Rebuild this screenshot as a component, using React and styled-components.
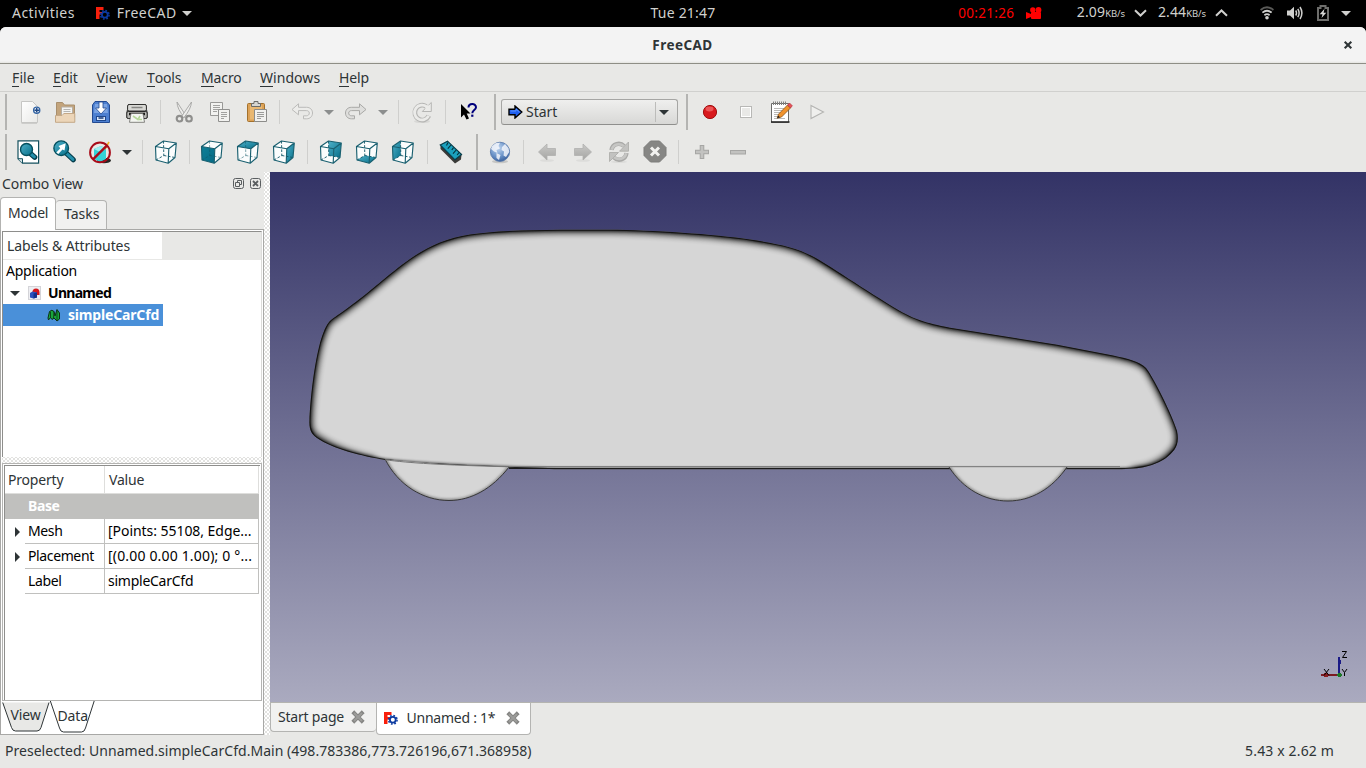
import React from "react";
import styled, { createGlobalStyle } from "styled-components";

const Global = createGlobalStyle`
  * { box-sizing: border-box; }
  html, body { margin: 0; padding: 0; overflow: hidden; }
  body { background: #000; font-family: "Noto Sans", "Open Sans", sans-serif; font-size: 14px; color: #2e3436; }
  svg { display: block; flex: none; }
`;

const Screen = styled.div`
  width: 1366px;
  height: 768px;
  display: flex;
  flex-direction: column;
  overflow: hidden;
  background: #000;
`;

const Text = styled.span`
  white-space: pre;
  font-size: ${(p) => p.$size || 14}px;
  letter-spacing: ${(p) => p.$ls ?? -0.2}px;
  font-weight: ${(p) => (p.$bold ? 700 : 400)};
  color: ${(p) => p.$color || "inherit"};
  line-height: 20px;
`;

/* ---------- desktop panel ---------- */
const Panel = styled.header`
  flex: none;
  height: 27px;
  display: flex;
  align-items: center;
  color: #d0d0ce;
  padding: 0 12px 1px;
`;
const PanelSide = styled.div`
  flex: 1 1 0;
  display: flex;
  align-items: center;
  justify-content: ${(p) => (p.$end ? "flex-end" : "flex-start")};
`;
const Rate = styled.div`
  display: flex;
  align-items: baseline;
`;
const Gap = styled.span`
  flex: none;
  width: ${(p) => p.$w}px;
`;
const Spacer = styled.span`
  flex: 1;
`;

/* ---------- window ---------- */
const Window = styled.main`
  flex: 1;
  min-height: 0;
  display: flex;
  flex-direction: column;
  background: #e8e8e6;
  border-radius: 6px 6px 0 0;
  overflow: hidden;
`;
const TitleBar = styled.div`
  flex: none;
  height: 37px;
  display: flex;
  align-items: center;
  background: linear-gradient(#f3f3f3 34px, #e4e4e0 36px);
  border-bottom: 1px solid #8e8e86;
  padding: 0 13px 0 0;
`;
const Title = styled.div`
  flex: 1;
  text-align: center;
  padding-left: 22px;
`;
const MenuBar = styled.nav`
  flex: none;
  height: 28px;
  display: flex;
  align-items: center;
  border-bottom: 1px solid #d0d0ce;
  padding-left: 12px;
`;
const MenuItem = styled.div`
  width: ${(p) => p.$w}px;
`;
const Mnemonic = styled.span`
  display: inline-block;
  line-height: 17px;
  border-bottom: 1px solid #2e3436;
`;

const ToolBar = styled.div`
  flex: none;
  height: 40px;
  display: flex;
  align-items: center;
  padding-left: ${(p) => p.$pad || 0}px;
`;
const Handle = styled.div`
  flex: none;
  width: ${(p) => p.$w}px;
  height: 36px;
  display: flex;
  padding-left: ${(p) => p.$off}px;
  &::before {
    content: "";
    width: 2px;
    background: #b4b4b2;
  }
`;
const Slot = styled.div`
  flex: none;
  width: ${(p) => p.$w || 36}px;
  height: 36px;
  display: flex;
  align-items: center;
  justify-content: center;
`;
const Separator = styled.div`
  flex: none;
  width: ${(p) => p.$w || 11}px;
  height: 24px;
  display: flex;
  justify-content: center;
  &::before {
    content: "";
    width: 1px;
    background: #cfcfcd;
  }
`;
const Combo = styled.div`
  flex: none;
  width: 177px;
  height: 26px;
  display: flex;
  align-items: center;
  border: 1px solid #a6a6a4;
  border-bottom-color: #8f8f8d;
  border-radius: 3px;
  background: linear-gradient(#efefee, #d8d8d6);
  padding-left: 6px;
`;
const ComboLabel = styled.span`
  flex: 1;
  padding-left: 3px;
`;
const ComboButton = styled.span`
  width: 22px;
  height: 20px;
  display: flex;
  align-items: center;
  padding-left: 3px;
  border-left: 1px solid #bcbcba;
`;

const Workspace = styled.div`
  flex: 1;
  min-height: 0;
  display: flex;
`;

/* ---------- combo view dock ---------- */
const Dock = styled.aside`
  flex: none;
  width: 264px;
  display: flex;
  flex-direction: column;
`;
const DockTitle = styled.div`
  flex: none;
  height: 25px;
  display: flex;
  align-items: center;
  padding: 0 2px 1px 2px;
`;
const DockTabs = styled.div`
  flex: none;
  height: 33px;
  display: flex;
  align-items: flex-end;
  position: relative;
  z-index: 1;
  margin-bottom: -1px;
`;
const DockTab = styled.div`
  width: ${(p) => p.$w}px;
  height: ${(p) => (p.$active ? 33 : 30)}px;
  padding: ${(p) => (p.$active ? "5px 0 0 7px" : "3px 0 0 8px")};
  background: ${(p) => (p.$active ? "#fff" : "#f1f1f0")};
  border: 1px solid #b3b3b1;
  border-bottom: ${(p) => (p.$active ? "0" : "1px solid #a8a8a6")};
  border-left-width: ${(p) => (p.$active ? 1 : 0)}px;
  border-radius: 4px 4px 0 0;
`;
const Pane = styled.div`
  flex: none;
  height: 506px;
  display: flex;
  flex-direction: column;
  background: #fff;
  border: 1px solid #a8a8a6;
  padding: 1px 1px 0 1px;
`;
const Tree = styled.div`
  height: 226px;
  flex: none;
  border: 1px solid #8e8e8c;
  border-bottom: 0;
  border-right: 1px solid #dcdcda;
`;
const TreeHeader = styled.div`
  height: 28px;
  display: flex;
  background: #e8e8e6;
  border-bottom: 1px solid #e8e8e6;
`;
const TreeHeaderCell = styled.div`
  width: 159px;
  background: #fff;
  padding: 4px 0 0 4px;
`;
const TreeRow = styled.div`
  height: 22px;
  width: ${(p) => (p.$selected ? 160 : 258)}px;
  display: flex;
  align-items: center;
  padding-left: ${(p) => p.$indent}px;
  color: ${(p) => (p.$selected ? "#fff" : "#000")};
  background: ${(p) => (p.$selected ? "#4a90d9" : "transparent")};
`;
const Dots = styled.div`
  flex: none;
  width: ${(p) => (p.$w ? p.$w + "px" : "auto")};
  height: ${(p) => (p.$h ? p.$h + "px" : "auto")};
  background-color: #e2e2e0;
  background-image: radial-gradient(circle, #fff 0.9px, transparent 1px), radial-gradient(circle, #fff 0.9px, transparent 1px);
  background-size: 4px 4px;
  background-position: 0 0, 2px 2px;
`;
const PropFrame = styled.div`
  flex: none;
  height: 238px;
  border: 1px solid #b4b4b2;
  padding: 1px 1px 0 1px;
`;
const PropTable = styled.div`
  height: 235px;
  border: 1px solid #8e8e8c;
  border-right: 0;
  border-bottom: 0;
`;
const PropRow = styled.div`
  width: 254px;
  height: ${(p) => p.$h || 25}px;
  display: flex;
  color: ${(p) => (p.$head ? "#2e3436" : "#000")};
`;
const Expander = styled.div`
  width: 20px;
  display: flex;
  align-items: center;
  justify-content: center;
  padding-left: 4px;
`;
const PropCell = styled.div`
  width: ${(p) => p.$w}px;
  display: flex;
  align-items: center;
  padding-left: ${(p) => p.$pad}px;
  border-right: 1px solid ${(p) => p.$line || "#c0c0be"};
  border-bottom: 1px solid ${(p) => p.$line || "#c0c0be"};
`;
const PropGroup = styled.div`
  height: 25px;
  width: 254px;
  display: flex;
  align-items: center;
  padding: 0 0 1px 23px;
  background: #c0c0be;
  color: #fff;
`;
const SheetTabs = styled.div`
  flex: 1;
  display: flex;
  margin-left: -2px;
`;

/* ---------- 3D area ---------- */
const Center = styled.section`
  flex: 1;
  min-width: 0;
  display: flex;
  flex-direction: column;
`;
const Viewport = styled.div`
  flex: none;
  height: 530px;
  background: linear-gradient(#333366, #aaaabf);
`;
const DocTabs = styled.div`
  flex: none;
  height: 33px;
  display: flex;
  align-items: flex-start;
  border-top: 1px solid #b4b4b0;
`;
const DocTab = styled.div`
  width: ${(p) => p.$w}px;
  height: ${(p) => (p.$active ? 32 : 29)}px;
  display: flex;
  align-items: center;
  padding: 0 0 ${(p) => (p.$active ? 1 : 0)}px ${(p) => (p.$active ? 6 : 7)}px;
  background: ${(p) => (p.$active ? "#fff" : "#f1f1f0")};
  border: 1px solid #b4b4b2;
  border-top: 0;
  border-right-width: ${(p) => (p.$active ? 1 : 0)}px;
  border-radius: 0 0 4px 4px;
`;
const StatusBar = styled.footer`
  flex: none;
  height: 33px;
  display: flex;
  align-items: center;
  justify-content: space-between;
  padding: 0 32px 1px 5px;
`;

/* ---------- icons ---------- */
const Ic = ({ s = 24, children, ...r }) => (
  <svg width={s} height={s} viewBox={`0 0 ${s} ${s}`} {...r}>{children}</svg>
);

const FreeCadLogo = ({ blue = "#0b3aa0" }) => (
  <svg width="15" height="15" viewBox="0 0 15 15">
    <path d="M1 1H8.5V4H4.500V6H7V8.500H4.500V13H1Z" fill="#f8200c" />
    <circle cx="9.8" cy="8.8" r="2.9" fill="none" stroke={blue} strokeWidth="1.8" />
    <circle cx="9.8" cy="8.8" r="4.3" fill="none" stroke={blue} strokeWidth="1.5" strokeDasharray="1.7 1.68" />
  </svg>
);

const Arrow = ({ color = "#2e3436", w = 10, h = 5 }) => (
  <svg width={w} height={h} viewBox="0 0 10 5" preserveAspectRatio="none"><path d="M0 0H10L5 5Z" fill={color} /></svg>
);

const Defs = () => (
  <svg width="0" height="0" style={{ position: "absolute" }}>
    <defs>
      <linearGradient id="teal" x1="0" y1="0" x2="1" y2="1"><stop offset="0" stopColor="#0e8098" /><stop offset="1" stopColor="#066a84" /></linearGradient>
      <linearGradient id="tealLight" x1="0" y1="0" x2="1" y2="1"><stop offset="0" stopColor="#4fb0c8" /><stop offset="1" stopColor="#066f8a" /></linearGradient>
      <linearGradient id="grey" x1="0" y1="0" x2="0" y2="1"><stop offset="0" stopColor="#c9c9c7" /><stop offset="1" stopColor="#a5a5a3" /></linearGradient>
      <linearGradient id="paper" x1="0" y1="0" x2="1" y2="1"><stop offset="0" stopColor="#fff" /><stop offset="1" stopColor="#e9e9e7" /></linearGradient>
      <radialGradient id="globe" cx=".4" cy=".3" r=".75"><stop offset="0" stopColor="#c0d6f0" /><stop offset=".6" stopColor="#6a92c8" /><stop offset="1" stopColor="#345b98" /></radialGradient>
    </defs>
  </svg>
);

const NewIcon = () => (
  <Ic>
    <path d="M3.5 22.8H19" stroke="#c4c4c2" strokeWidth="2" />
    <path d="M3.5 1.5H14.5L19.5 6.5V22.5H3.5Z" fill="url(#paper)" stroke="#c6c6c4" />
    <circle cx="18.7" cy="10.3" r="3.1" fill="#fff" stroke="#3465a4" strokeWidth="1.3" />
    <path d="M18.7 8V12.6M16.4 10.3H21" stroke="#204a87" strokeWidth="1.6" />
  </Ic>
);
const OpenIcon = () => (
  <Ic>
    <path d="M2.5 17V2.5H8.5L10.5 5H20.5V17Z" fill="#c3a47c" stroke="#a98f6d" />
    <path d="M7.5 7H18.5V17H7.5Z" fill="#f4f4f2" stroke="#b5aea4" />
    <path d="M9.5 9.5H16.5M9.5 11.5H16.5M9.5 13.5H14" stroke="#b5b5b3" />
    <path d="M1.5 15.5H8L10 13.5H20.8V22.3H1.5Z" fill="#ecd5b8" stroke="#c4a887" />
  </Ic>
);
const SaveIcon = () => (
  <Ic>
    <path d="M6 1.5H17.5L20.5 5V22.5H3.5V5Z" fill="#4c7fd0" stroke="#234a91" />
    <path d="M6 4H18L19 13H5Z" fill="#7aa3e2" />
    <path d="M10 2V8H6.5L12 14L17.5 8H14V2Z" fill="#fff" stroke="#1f488e" strokeWidth=".8" />
    <rect x="7.5" y="16.5" width="9" height="4" fill="#dbe7f8" stroke="#1f488e" />
    <path d="M9.5 18H14.5" stroke="#1a3c78" strokeWidth="1.4" />
  </Ic>
);
const PrintIcon = () => (
  <Ic>
    <path d="M3.5 4.5H20.5L22 12V18H2V12Z" fill="#8e8e8a" stroke="#2c2c2a" />
    <rect x="2.6" y="4.5" width="18.8" height="6.5" rx="1.5" fill="#d8d8d4" stroke="#30302e" />
    <path d="M6.5 7.5H17.5" stroke="#858582" strokeWidth="1.4" />
    <rect x="1.8" y="11.5" width="20.4" height="7" rx="1.5" fill="#b8b8b4" stroke="#2a2a28" />
    <path d="M4 14H20" stroke="#1c1c1a" strokeWidth="2.4" />
    <path d="M6 13.5H18L19.5 22.3H4.5Z" fill="#f4f6f1" stroke="#696966" strokeWidth=".8" />
    <path d="M8 16L13 19.5L15 16M14 19.5H17" stroke="#b6d79a" strokeWidth="1.6" fill="none" />
  </Ic>
);
const CutIcon = () => (
  <Ic>
    <path d="M5 2L14.5 16.5L12.5 17.5Q5 9 5 2Z" fill="#ededeb" stroke="#a3a3a1" strokeWidth=".9" />
    <path d="M19.5 2L9.5 16.5L12 17.5Q19 9 19.5 2Z" fill="#ededeb" stroke="#a3a3a1" strokeWidth=".9" />
    <circle cx="7.5" cy="18.7" r="2.8" fill="none" stroke="#8f8f8d" strokeWidth="2.1" />
    <circle cx="17" cy="18.7" r="2.8" fill="none" stroke="#8f8f8d" strokeWidth="2.1" />
  </Ic>
);
const CopyIcon = () => (
  <Ic>
    <path d="M2.5 2.5H14.5V15.5H2.5Z" fill="#f2f2f0" stroke="#999997" />
    <path d="M5 5.5H12M5 7.5H12M5 9.5H12M5 11.5H9" stroke="#a2a2a0" />
    <path d="M10.5 9.5H21.5V21.5H10.5Z" fill="#f2f2f0" stroke="#90908e" />
    <path d="M13 12.5H19M13 14.5H19M13 16.5H19M13 18.5H16" stroke="#a2a2a0" />
  </Ic>
);
const PasteIcon = () => (
  <Ic>
    <rect x="3.5" y="3.5" width="17" height="18" rx="1" fill="#dca257" stroke="#a3712c" />
    <path d="M6 5.5H18V19.5H6Z" fill="#e9b872" />
    <path d="M7.5 6.5V3.5H10V1.5H14V3.5H16.5V6.5Z" fill="#d6d6d2" stroke="#6b6b68" />
    <path d="M10.5 9.5H22.5V21.5H10.5Z" fill="#f1f1ef" stroke="#8c8c8a" />
    <path d="M13 12.5H20M13 14.5H20M13 16.5H20M13 18.5H17" stroke="#9b9b99" />
  </Ic>
);
const UndoIcon = ({ flip }) => (
  <Ic>
    <g transform={flip ? "translate(24 0) scale(-1 1)" : undefined}>
      <path d="M2 9.5L8.5 3.8V7.3H16.5C20.5 7.3 22.5 10 22.5 13C22.5 16.5 20 18.8 16.5 18.8H13.5V15.8H16.3C18.3 15.8 19.3 14.6 19.3 13.1C19.3 11.6 18.2 10.6 16.5 10.6H8.5V14.8Z"
        fill={flip ? "#dededc" : "#ececea"} stroke={flip ? "#a9a9a7" : "#bbbbb9"} strokeLinejoin="round" />
    </g>
  </Ic>
);
const RefreshIcon = () => (
  <Ic>
    <ellipse cx="12" cy="21.5" rx="8" ry="1.6" fill="#d8d8d6" />
    <path d="M16.2 6.4A7.4 7.4 0 1 0 18.9 15.8" fill="none" stroke="#b6b6b4" strokeWidth="4.8" />
    <path d="M21.3 2.5V11.5H12.3L15.2 8.5Z" fill="#ebebe9" stroke="#b6b6b4" />
    <path d="M16.8 6.9A7.4 7.4 0 1 0 18.6 15.8" fill="none" stroke="#ebebe9" strokeWidth="2.8" />
    <path d="M16 6.5L19.5 5L19.8 9.8L15 10Z" fill="#ebebe9" />
  </Ic>
);
const WhatsThisIcon = () => (
  <Ic>
    <path d="M4 4V17.5L7 14.5L9.5 19.5L12 18.5L9.7 13.5H13.5Z" fill="#000" />
    <path d="M11.5 7.5C11.5 3 19 3 19 7.2C19 10 15.3 10 15.3 13.2" fill="none" stroke="#00007c" strokeWidth="2" />
    <rect x="14.2" y="14.6" width="2.2" height="2.2" fill="#00007c" />
  </Ic>
);
const BlueArrow = () => (
  <svg width="15" height="14" viewBox="0 0 15 14">
    <path d="M1 4.2H7V1L13.8 7L7 13V9.8H1Z" fill="#1f5ff0" stroke="#000" strokeWidth="1.4" />
    <path d="M2.5 6H8V4L11.5 7" fill="none" stroke="#5a94ff" strokeWidth="1" />
  </svg>
);
const RecordIcon = () => (
  <Ic>
    <circle cx="12" cy="12" r="6.6" fill="#d81a1e" stroke="#a01010" />
    <ellipse cx="11.5" cy="9" rx="4" ry="2.4" fill="#f57070" opacity=".7" />
  </Ic>
);
const StopIcon = () => (
  <Ic><rect x="6.5" y="6.5" width="11" height="11" fill="#efefed" stroke="#b8b8b6" /><rect x="7.5" y="7.5" width="9" height="9" fill="#e9e9e7" stroke="#fff" /></Ic>
);
const MacroIcon = () => (
  <Ic>
    <path d="M1.5 3.5H18.5V22.3H1.5Z" fill="#fff" stroke="#6a6a68" />
    <path d="M1 22H19.5" stroke="#222" strokeWidth="1.6" />
    <path d="M3.5 1.5V5M5.5 1.5V5M7.5 1.5V5M9.5 1.5V5M11.5 1.5V5M13.5 1.5V5M15.5 1.5V5" stroke="#80807e" />
    <path d="M4 8.5H14M4 10.5H13M4 12.5H11M4 14.5H10M4 16.5H8M4 18.5H15" stroke="#b9b9b7" />
    <path d="M7.2 18.2L8.5 14.2L17.5 5L20.5 8L11.5 17Z" fill="#f0922c" stroke="#8b5418" strokeWidth=".8" />
    <path d="M17.5 5L19.5 3L22.3 5.8L20.5 8Z" fill="#e5525a" stroke="#b5343b" strokeWidth=".7" />
    <path d="M7.2 18.2L8.2 15.5L10 17.2Z" fill="#222" />
  </Ic>
);
const PlayIcon = () => (
  <Ic><path d="M6 5.5L18.5 12L6 18.5Z" fill="#efefed" stroke="#b4b4b2" strokeWidth="1.1" /></Ic>
);

const Lens = ({ r = 6.5, cx, cy, dx = 10.5 }) => (
  <>
    <path d={`M${cx + 4.5} ${cy + 4.5}L${cx + dx} ${cy + dx - 0.5}`} stroke="#053d4c" strokeWidth="5.2" strokeLinecap="round" />
    <path d={`M${cx + 5} ${cy + 5}L${cx + dx - 0.3} ${cy + dx - 0.8}`} stroke="#2390ac" strokeWidth="3" strokeLinecap="round" />
    <circle cx={cx} cy={cy} r={r} fill="url(#tealLight)" stroke="#04505f" strokeWidth="1.4" />
  </>
);
const FitAllIcon = () => (
  <Ic>
    <path d="M2 .8H22.6V23.2H6.5L2 18.7Z" fill="#fff" stroke="#14505e" strokeWidth="1.2" />
    <path d="M2 18.7H6.5V23.2" fill="#cfdfe2" stroke="#14505e" />
    <Lens cx={10.5} cy={9.5} r={6} dx={8.2} />
  </Ic>
);
const FitSelIcon = () => (
  <Ic>
    <Lens cx={9.2} cy={8.2} r={7.3} dx={12} />
    <path d="M4.3 12.4L8.3 8.2L6.5 6L13.7 3.2L12.5 10.6L10.5 9.6L6.3 14Z" fill="#fff" />
  </Ic>
);
const DrawStyleIcon = () => (
  <Ic>
    <ellipse cx="16" cy="20.5" rx="7" ry="2.8" fill="#272725" />
    <path d="M6 9L13 6L18 8.5V19L12 22L6 19Z" fill="#35d2d8" />
    <path d="M6 9L13 6L18 8.5L12 12Z" fill="#9cecee" />
    <path d="M17 9L21 2" stroke="#f0b528" strokeWidth="1.6" />
    <circle cx="12" cy="12.4" r="9.9" fill="none" stroke="#a80c1a" strokeWidth="2" />
    <path d="M5.2 5.6L18.8 19.2" stroke="none" />
    <path d="M5.2 19.2L18.8 5.6" stroke="#a80c1a" strokeWidth="2.4" />
  </Ic>
);

const faces = {
  front: "M1.5 6.5L14.8 8.8L14.2 23.2L2 20Z",
  top: "M1.5 6.5L9.5 1L22.3 3L14.8 8.8Z",
  right: "M14.8 8.8L22.3 3L21 17.5L14.2 23.2Z",
  rear: "M9.5 1L22.3 3L21 17.5L9.8 15.5Z",
  bottom: "M2 20L9.8 15.5L21 17.5L14.2 23.2Z",
  left: "M1.5 6.5L9.5 1L9.8 15.5L2 20Z",
};
const CubeIcon = ({ face }) => (
  <Ic>
    <path d="M1.5 6.5L9.5 1L22.3 3L21 17.5L14.2 23.2L2 20Z" fill="#fbfdfd" />
    {face && <path d={faces[face]} fill={face === "front" ? "url(#teal)" : "url(#tealLight)"} />}
    <path d="M9.5 1L9.8 15.5L2 20M9.8 15.5L21 17.5" fill="none" stroke="#0e5565" strokeWidth=".9" strokeDasharray="2.6 1.6"
      opacity={face === "front" || face === "top" ? 0.6 : 1} />
    <path d="M1.5 6.5L9.5 1L22.3 3L21 17.5L14.2 23.2L2 20ZM1.5 6.5L14.8 8.8L22.3 3M14.8 8.8L14.2 23.2" fill="none" stroke="#1a6070" strokeWidth="1.15" strokeLinejoin="round" />
  </Ic>
);
const RulerIcon = () => (
  <Ic>
    <path d="M1.5 5.5L1.5 9L16 23.6L22 19.5L22.6 14Z" fill="#3a3a38" />
    <path d="M1.2 5L8.5 1.2L22.6 14.5L16 19.8Z" fill="#1ba0bd" stroke="#083c48" strokeWidth="1.1" />
    <path d="M9 2.5L7.5 5.4M12 5L8.8 8.6M14.5 7.6L12.8 10M17.2 10L14 13.6M20 12.5L18.2 15" stroke="#052f39" strokeWidth="1.1" />
  </Ic>
);
const GlobeIcon = () => (
  <Ic>
    <ellipse cx="12" cy="21.5" rx="8" ry="1.8" fill="#c6c6c4" />
    <circle cx="12" cy="11.8" r="9.6" fill="url(#globe)" stroke="#5074a8" strokeWidth=".8" />
    <path d="M4 6L8 3L12 2.8L10.5 6L12 8.5L8.5 10L9.5 13L6 11.5L3 9Z" fill="#f3f6fb" opacity=".85" />
    <path d="M14 7L17 4L20.5 8L21.3 12L18 17L15.5 15.5L16 11.5L13.5 10Z" fill="#f3f6fb" opacity=".85" />
    <path d="M8.5 13L12.5 15L11 20L8.5 18Z" fill="#f3f6fb" opacity=".85" />
  </Ic>
);
const NavArrow = ({ flip }) => (
  <Ic>
    <ellipse cx="12" cy="20.5" rx="7" ry="1.3" fill="#dcdcda" />
    <path transform={flip ? "translate(24 0) scale(-1 1)" : undefined} d="M3.5 12L12 4V8.5H20.5V15.5H12V20Z" fill="url(#grey)" stroke="#b0b0ae" strokeWidth=".8" />
  </Ic>
);
const ReloadIcon = () => (
  <Ic>
    <ellipse cx="12" cy="21.8" rx="8" ry="1.3" fill="#dcdcda" />
    <path d="M4.5 10C5.5 3.5 13 2 17 6M19.5 13C18.5 20 11 21.5 7 17.5" fill="none" stroke="#a9a9a7" strokeWidth="4.4" />
    <path d="M4.8 9.8C6 4 13 2.7 17 6.4M19.2 13.2C18 19 11 20.7 7 17" fill="none" stroke="#c6c6c4" strokeWidth="2.6" />
    <path d="M21.5 2V11.2H12.5ZM2.5 21.5V12.5H11.5Z" fill="#c2c2c0" stroke="#a9a9a7" strokeWidth=".8" />
  </Ic>
);
const StopLoadIcon = () => (
  <Ic>
    <path d="M7.5 1H16.5L23 7.5V15.5L16.5 22H7.5L1 15.5V7.5Z" fill="#868684" stroke="#7c7c7a" />
    <path d="M8 7.5L16 15.5M16 7.5L8 15.5" stroke="#f2f2f0" strokeWidth="3" />
  </Ic>
);
const ZoomSign = ({ plus }) => (
  <Ic>
    <path d={plus ? "M12 5V19M5 12H19" : "M4 12.2H20"} stroke="#a6a6a4" strokeWidth={plus ? 4.6 : 4.4} />
    <path d={plus ? "M12 6V18M6 12H18" : "M5 12.2H19"} stroke="#c2c2c0" strokeWidth="2.6" />
  </Ic>
);
const CloseX = () => (
  <Ic s={14}>
    <path d="M3.2 3.2L10.8 10.8M10.8 3.2L3.2 10.8" stroke="#858583" strokeWidth="4" strokeLinecap="square" />
    <path d="M3 3L11 11M11 3L3 11" stroke="#9c9c9a" strokeWidth="2" />
  </Ic>
);

const bodyPath =
  "M309.5 420C310 405 313 370 320 343C323 333 326 324 331 320C336 316 343 312 353 304C366 295 390 273 410 259C427 247 446 238 470 234.5C492 231 525 230 560 229.700H610C650 230 715 234 750 239.500C776 243.500 795 247 812 256C826 263 866 291 900 311C914 319 925 323 950 327.700L1057 344.700L1113 355.500C1127 358.500 1140 361.500 1146 368C1152 375 1172 414 1177 431C1180 446 1174 451 1166 458C1154 466 1142 469 1117 469.300H560C520 468 430 466 385 460C362 456 333 449 317 438C311 434 309 429 309.5 420Z";

const shadePath =
  "M1132 471C1150 469 1160 463 1166 458C1174 451 1180 446 1177 431C1172 414 1152 375 1146 368C1140 361.5 1127 358.5 1113 355.5L1057 344.7L950 327.7C925 323 914 319 900 311C866 291 826 263 812 256C795 247 776 243.5 750 239.5C715 234 650 230 610 229.7H560C525 230 492 231 470 234.5C446 238 427 247 410 259C390 273 366 295 353 304C343 312 336 316 331 320C326 324 323 333 320 343C313 370 310 405 309.5 420C309 429 311 434 317 438C333 449 350 455 375 461";

const wheelArcs = "M509 467C492 489 471 500.5 449 500.5C423 500.5 398 485 385 459M949 467C963 489 985 501 1008 501C1031 501 1052 489 1067 467";

const Car = () => (
  <svg width="1096" height="530" viewBox="270 172 1096 530">
    <defs>
      <clipPath id="bodyClip"><path d={bodyPath} /></clipPath>
      <filter id="soft" filterUnits="userSpaceOnUse" x="270" y="172" width="1096" height="530"><feGaussianBlur stdDeviation="3" /></filter>
      <filter id="soft2" filterUnits="userSpaceOnUse" x="270" y="172" width="1096" height="530"><feGaussianBlur stdDeviation="1.4" /></filter>
      <clipPath id="wheels"><path d="M385 459L509 467C492 489 471 500.5 449 500.5C423 500.5 398 485 385 459ZM949 467H1067C1052 489 1031 501 1008 501C985 501 963 489 949 467Z" /></clipPath>
    </defs>
    <path d={bodyPath} fill="#d6d6d6" />
    <g clipPath="url(#bodyClip)">
      <path d={shadePath} fill="none" stroke="#000" strokeWidth="6.5" opacity=".8" filter="url(#soft)" />
      <path d={bodyPath} fill="none" stroke="#000" strokeWidth="2" filter="url(#soft2)" />
      <path d={bodyPath} fill="none" stroke="#0c0c0c" strokeWidth="2" opacity=".8" />
    </g>
    <path d="M509 466.5H949M1067 466.5H1120" stroke="#808080" />
    <path d="M509 468.5H949M1067 468.5H1125" stroke="#1a1a1a" />
    <path d="M385 459.5L445 464.5L509 467C492 489 471 500.5 449 500.5C423 500.5 398 485 385 459ZM949 467H1067C1052 489 1031 501 1008 501C985 501 963 489 949 467Z" fill="#d6d6d6" />
    <g clipPath="url(#wheels)">
      <path d={wheelArcs} fill="none" stroke="#555" strokeWidth="2" filter="url(#soft2)" />
    </g>
    <path d={wheelArcs} fill="none" stroke="#2a2a2a" strokeWidth=".9" />
    <path d="M385 459.8C410 463 440 465 509 466.8M949 466.7H1067" fill="none" stroke="#777" strokeWidth="1" />
    <g shapeRendering="crispEdges">
      <path d="M1321 675H1339" stroke="#7d1a22" strokeWidth="2" />
      <rect x="1324" y="673" width="4" height="4" fill="#8a1c20" />
      <path d="M1339 657V674" stroke="#1a1a86" strokeWidth="2" />
      <rect x="1339" y="660" width="2" height="4" fill="#1a1a86" />
      <rect x="1338" y="673" width="3" height="4" fill="#1d7a28" />
      <rect x="1337" y="674" width="5" height="2" fill="#1d7a28" />
    </g>
    <path d="M1342 651.5H1346.5L1342.5 657.5H1347M1342 669L1344.5 672.5L1347 669M1344.5 672.5V676M1324 669L1329 675.5M1329 669L1324 675.5" fill="none" stroke="#000" strokeWidth="1" />
  </svg>
);

const menu = [["File", 41], ["Edit", 43.5], ["View", 50.5], ["Tools", 54], ["Macro", 59], ["Windows", 79], ["Help", 40]];

const properties = [
  { name: "Mesh", value: "[Points: 55108, Edge...", ls: -0.05, expandable: true },
  { name: "Placement", value: "[(0.00 0.00 1.00); 0 °...", ls: 0.17, expandable: true },
  { name: "Label", value: "simpleCarCfd", ls: -0.25, expandable: false },
];

export default function App() {
  return (
    <Screen>
      <Global />
      <Defs />
      <Panel>
        <PanelSide>
          <Text $ls={0.45}>Activities</Text>
          <Gap $w={20} />
          <FreeCadLogo />
          <Gap $w={7} />
          <Text $ls={0.45}>FreeCAD</Text>
          <Gap $w={5} />
          <Arrow color="#d0d0ce" />
        </PanelSide>
        <Text $ls={0.22}>Tue 21:47</Text>
        <PanelSide $end>
          <Text $color="#f00" $size={13.5} $ls={0.3}>00:21:26</Text>
          <Gap $w={12} />
          <svg width="16" height="13" viewBox="0 0 16 13">
            <circle cx="6.8" cy="3" r="2.7" fill="#f00" /><circle cx="12.5" cy="2.9" r="2.9" fill="#f00" />
            <rect x="5" y="5" width="10" height="7" rx="1" fill="#f00" /><path d="M0 5L5 7V10L0 12Z" fill="#f00" />
          </svg>
          <Gap $w={34.5} />
          <Rate><Text $ls={0.15}>2.09</Text><Text $size={9.5} $ls={-0.1}>KB/s</Text></Rate>
          <Gap $w={9} />
          <svg width="13" height="8" viewBox="0 0 13 8"><path d="M1 1.2L6.5 6.5L12 1.2" fill="none" stroke="#d0d0ce" strokeWidth="2" /></svg>
          <Gap $w={11} />
          <Rate><Text $ls={0.15}>2.44</Text><Text $size={9.5} $ls={-0.1}>KB/s</Text></Rate>
          <Gap $w={9} />
          <svg width="13" height="8" viewBox="0 0 13 8"><path d="M1 6.8L6.5 1.5L12 6.8" fill="none" stroke="#d0d0ce" strokeWidth="2" /></svg>
          <Gap $w={32} />
          <svg width="14" height="14" viewBox="0 0 14 14">
            <path d="M.6 4Q7 -1.5 13.4 4" fill="none" stroke="#5a5a58" strokeWidth="1.8" />
            <path d="M2.4 6.6Q7 3 11.6 6.6M4.4 9.2Q7 7.2 9.6 9.2" fill="none" stroke="#d0d0ce" strokeWidth="1.8" />
            <circle cx="7" cy="11.8" r="1.8" fill="#d0d0ce" />
          </svg>
          <Gap $w={13} />
          <svg width="16" height="14" viewBox="0 0 16 14">
            <path d="M0 4.5H3L7 .8V13.2L3 9.5H0Z" fill="#d0d0ce" />
            <path d="M8.7 4.5Q10.3 7 8.7 9.5M10.8 2.8Q13.4 7 10.8 11.2M13 1Q16.8 7 13 13" fill="none" stroke="#d0d0ce" strokeWidth="1.5" />
          </svg>
          <Gap $w={14} />
          <svg width="12" height="16" viewBox="0 0 12 16">
            <path d="M1 3H3.5V1H8.5V3H11V15H1Z" fill="none" stroke="#6e6e6c" strokeWidth="2" />
            <path d="M7.5 3.8L2.7 9.3H5.5L4.5 13L9.3 7.7H6.6Z" fill="#d8d8d6" />
          </svg>
          <Gap $w={12} />
          <Arrow color="#d0d0ce" />
          <Gap $w={3} />
        </PanelSide>
      </Panel>

      <Window>
        <TitleBar>
          <Title><Text $bold $size={13.5} $ls={0.45}>FreeCAD</Text></Title>
          <Ic s={10}><path d="M1.7 1.7L8.3 8.3M8.3 1.7L1.7 8.3" stroke="#2e3436" strokeWidth="2.1" /></Ic>
        </TitleBar>
        <MenuBar>
          {menu.map(([label, w]) => (
            <MenuItem key={label} $w={w}>
              <Text $ls={label === "File" || label === "View" ? 0.1 : label === "Windows" ? 0.05 : -0.12}><Mnemonic>{label[0]}</Mnemonic>{label.slice(1)}</Text>
            </MenuItem>
          ))}
        </MenuBar>

        <ToolBar $pad={5}>
          <Handle $w={7} $off={0} />
          <Slot><NewIcon /></Slot>
          <Slot $w={35}><OpenIcon /></Slot>
          <Slot><SaveIcon /></Slot>
          <Slot><PrintIcon /></Slot>
          <Separator />
          <Slot><CutIcon /></Slot>
          <Slot><CopyIcon /></Slot>
          <Slot><PasteIcon /></Slot>
          <Separator />
          <Slot $w={34}><UndoIcon /></Slot>
          <Slot $w={20}><Arrow color="#8c8e8e" /></Slot>
          <Slot $w={34}><UndoIcon flip /></Slot>
          <Slot $w={20}><Arrow color="#8c8e8e" /></Slot>
          <Separator />
          <Slot><RefreshIcon /></Slot>
          <Separator />
          <Slot><WhatsThisIcon /></Slot>
          <Handle $w={14} $off={7} />
          <Combo>
            <BlueArrow />
            <ComboLabel><Text $ls={-0.05}>Start</Text></ComboLabel>
            <ComboButton><Arrow /></ComboButton>
          </Combo>
          <Handle $w={14} $off={8} />
          <Slot><RecordIcon /></Slot>
          <Slot><StopIcon /></Slot>
          <Slot $w={35}><MacroIcon /></Slot>
          <Slot><PlayIcon /></Slot>
        </ToolBar>
        <ToolBar $pad={5}>
          <Handle $w={5} $off={0} />
          <Slot><FitAllIcon /></Slot>
          <Slot><FitSelIcon /></Slot>
          <Slot><DrawStyleIcon /></Slot>
          <Slot $w={18}><Arrow /></Slot>
          <Separator $w={12} />
          <Slot><CubeIcon /></Slot>
          <Separator $w={10} />
          <Slot><CubeIcon face="front" /></Slot>
          <Slot><CubeIcon face="top" /></Slot>
          <Slot><CubeIcon face="right" /></Slot>
          <Separator />
          <Slot><CubeIcon face="rear" /></Slot>
          <Slot><CubeIcon face="bottom" /></Slot>
          <Slot><CubeIcon face="left" /></Slot>
          <Separator $w={12} />
          <Slot><RulerIcon /></Slot>
          <Handle $w={13} $off={7} />
          <Slot><GlobeIcon /></Slot>
          <Separator />
          <Slot><NavArrow /></Slot>
          <Slot><NavArrow flip /></Slot>
          <Slot><ReloadIcon /></Slot>
          <Slot><StopLoadIcon /></Slot>
          <Separator />
          <Slot><ZoomSign plus /></Slot>
          <Slot><ZoomSign /></Slot>
        </ToolBar>

        <Workspace>
          <Dock>
            <DockTitle>
              <Text $ls={-0.08}>Combo View</Text>
              <Spacer />
              <Ic s={12}><rect x=".5" y=".5" width="10" height="10" rx="2" fill="none" stroke="#5a5e60" /><path d="M4.5 4V2.5H8.5V6.5H7M2.5 4.5H6.5V8.5H2.5Z" fill="none" stroke="#5a5e60" /></Ic>
              <Gap $w={5} />
              <Ic s={12}><rect x=".5" y=".5" width="10" height="10" rx="2" fill="none" stroke="#5a5e60" /><path d="M3 3L8 8M8 3L3 8" stroke="#5a5e60" strokeWidth="1.8" /></Ic>
            </DockTitle>
            <DockTabs>
              <DockTab $active $w={56}><Text>Model</Text></DockTab>
              <DockTab $w={51}><Text $ls={0}>Tasks</Text></DockTab>
            </DockTabs>
            <Pane>
              <Tree>
                <TreeHeader><TreeHeaderCell><Text $ls={-0.1}>Labels &amp; Attributes</Text></TreeHeaderCell></TreeHeader>
                <TreeRow $indent={3}><Text $ls={-0.25}>Application</Text></TreeRow>
                <TreeRow $indent={7}>
                  <Arrow />
                  <Gap $w={8} />
                  <svg width="13" height="14" viewBox="0 0 13 14">
                    <rect x=".5" y=".5" width="12" height="13" fill="#eeeef2" stroke="#d4d4d8" />
                    <path d="M4.5 6Q4.5 2.5 8 2.5Q11.500 2.5 11.500 6.5V9H8Z" fill="#d4161c" />
                    <path d="M2 7L4.5 5.5L9 6.5V11.5L5.5 12.5L2 11.5Z" fill="#2a50bc" />
                    <path d="M5.5 7.5L9 6.5V11.5L5.5 12.5Z" fill="#14308c" />
                  </svg>
                  <Gap $w={7} />
                  <Text $bold $ls={-0.7}>Unnamed</Text>
                </TreeRow>
                <TreeRow $indent={44} $selected>
                  <svg width="14" height="14" viewBox="0 0 14 14">
                    <path d="M1 10L2.5 3.5Q5 1 7 3.5L8 8L10 1.5L12.5 5V11L10 13L7 10L5 11.5L3.5 9.5L1.5 12Z" fill="#18a53c" stroke="#0b3014" />
                    <path d="M7 3.5L6.5 10M10 2L10 12M3.5 4L3.5 9.5" stroke="#0b3014" strokeWidth=".8" />
                  </svg>
                  <Gap $w={7} />
                  <Text $bold $ls={-0.17}>simpleCarCfd</Text>
                </TreeRow>
              </Tree>
              <Dots $h={6} />
              <PropFrame>
                <PropTable>
                  <PropRow $h={28} $head>
                    <PropCell $w={100} $pad={3} $line="#dededc"><Text>Property</Text></PropCell>
                    <PropCell $w={154} $pad={4} $line="#dededc"><Text>Value</Text></PropCell>
                  </PropRow>
                  <PropGroup><Text $bold $ls={-0.4}>Base</Text></PropGroup>
                  {properties.map((p) => (
                    <PropRow key={p.name}>
                      <Expander>{p.expandable && <svg width="5" height="10" viewBox="0 0 5 10"><path d="M0 0L5 5L0 10Z" fill="#2e3436" /></svg>}</Expander>
                      <PropCell $w={80} $pad={3}><Text $ls={-0.38}>{p.name}</Text></PropCell>
                      <PropCell $w={154} $pad={3}><Text $ls={p.ls}>{p.value}</Text></PropCell>
                    </PropRow>
                  ))}
                </PropTable>
              </PropFrame>
              <SheetTabs>
                <svg width="262" height="32" viewBox="0 1 262 32" fontFamily="Noto Sans, sans-serif" fontSize="14" letterSpacing="-.15" fill="#2e3436">
                  <path d="M2.7 2.5L11.5 27.5Q12.5 31 15.5 31H37Q40 31 41 27.5L49 2.5Z" fill="#e8e8e6" />
                  <path d="M2.7 2.5L11.5 27.5Q12.5 31 15.5 31H37Q40 31 41 27.5L49 2.5" fill="none" stroke="#2e3436" />
                  <path d="M50 0L59.5 28Q60.5 32 63.5 32H81.5Q84.5 32 85.5 28L94.5 0" fill="#fff" stroke="#2e3436" />
                  <text x="10.5" y="20">View</text>
                  <text x="57.5" y="21">Data</text>
                </svg>
              </SheetTabs>
            </Pane>
          </Dock>
          <Dots $w={6} />
          <Center>
            <Viewport><Car /></Viewport>
            <DocTabs>
              <DocTab $w={106}><Text>Start page</Text><Gap $w={7} /><CloseX /></DocTab>
              <DocTab $w={155} $active>
                <FreeCadLogo /><Gap $w={8.5} /><Text $ls={-0.25}>Unnamed : 1*</Text><Gap $w={10.5} /><CloseX />
              </DocTab>
            </DocTabs>
          </Center>
        </Workspace>
        <StatusBar>
          <Text $ls={0.03}>Preselected: Unnamed.simpleCarCfd.Main (498.783386,773.726196,671.368958)</Text>
          <Text $ls={0.15}>5.43 x 2.62 m</Text>
        </StatusBar>
      </Window>
    </Screen>
  );
}
